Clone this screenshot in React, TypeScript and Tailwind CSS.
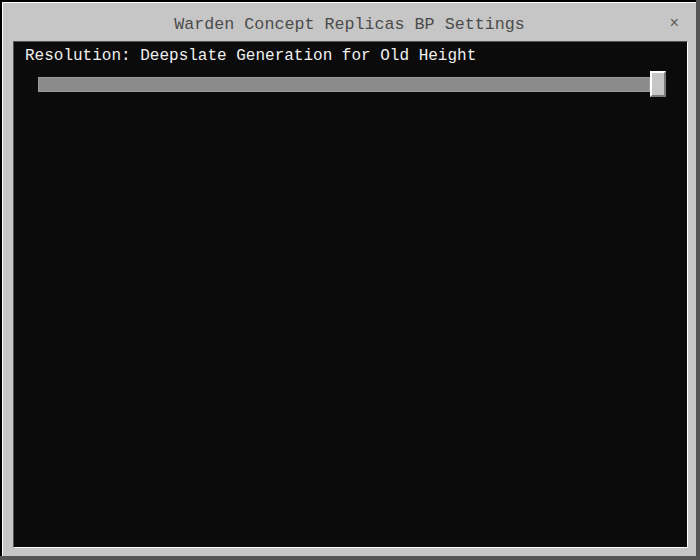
import React from "react";

export default function App() {
  const mono = { fontFamily: '"Liberation Mono", "DejaVu Sans Mono", monospace' };
  return (
    <div className="w-[700px] h-[560px] bg-[#555555] pr-[4px] pb-[4px]">
      <div className="h-full w-full border-t-2 border-l-2 border-black">
        <div className="h-full w-full border-t border-l border-white bg-[#c6c6c6] flex flex-col pl-[10px] pr-[8px] pb-[8px]">
          <div className="h-[38px] relative flex items-center justify-center pt-[7px]">
            <span className="text-[16.7px] leading-none text-[#4c4c4c] -ml-[2px]" style={mono}>
              Warden Concept Replicas BP Settings
            </span>
            <span className="absolute right-[9px] top-[13px] text-[16px] leading-none text-[#5a5a5a]" style={mono}>
              ×
            </span>
          </div>
          <div className="flex-1 bg-[#0b0b0b] border-t border-l border-[#555555] border-b border-r border-b-white border-r-white flex flex-col pl-[11px] pt-[5px]">
            <div className="text-[16px] leading-[18px] text-[#f0f0f0]" style={mono}>
              Resolution: Deepslate Generation for Old Height
            </div>
            <div className="flex items-center mt-[6px] ml-[13px]">
              <div className="w-[612px] h-[15px] bg-[#8b8b8b] border border-[#9a9a9a]" />
              <div className="w-[16px] h-[26px] bg-[#c6c6c6] border-t-2 border-l-2 border-white border-b-2 border-r-2 border-b-[#7a7a7a] border-r-[#7a7a7a]" />
            </div>
          </div>
        </div>
      </div>
    </div>
  );
}
